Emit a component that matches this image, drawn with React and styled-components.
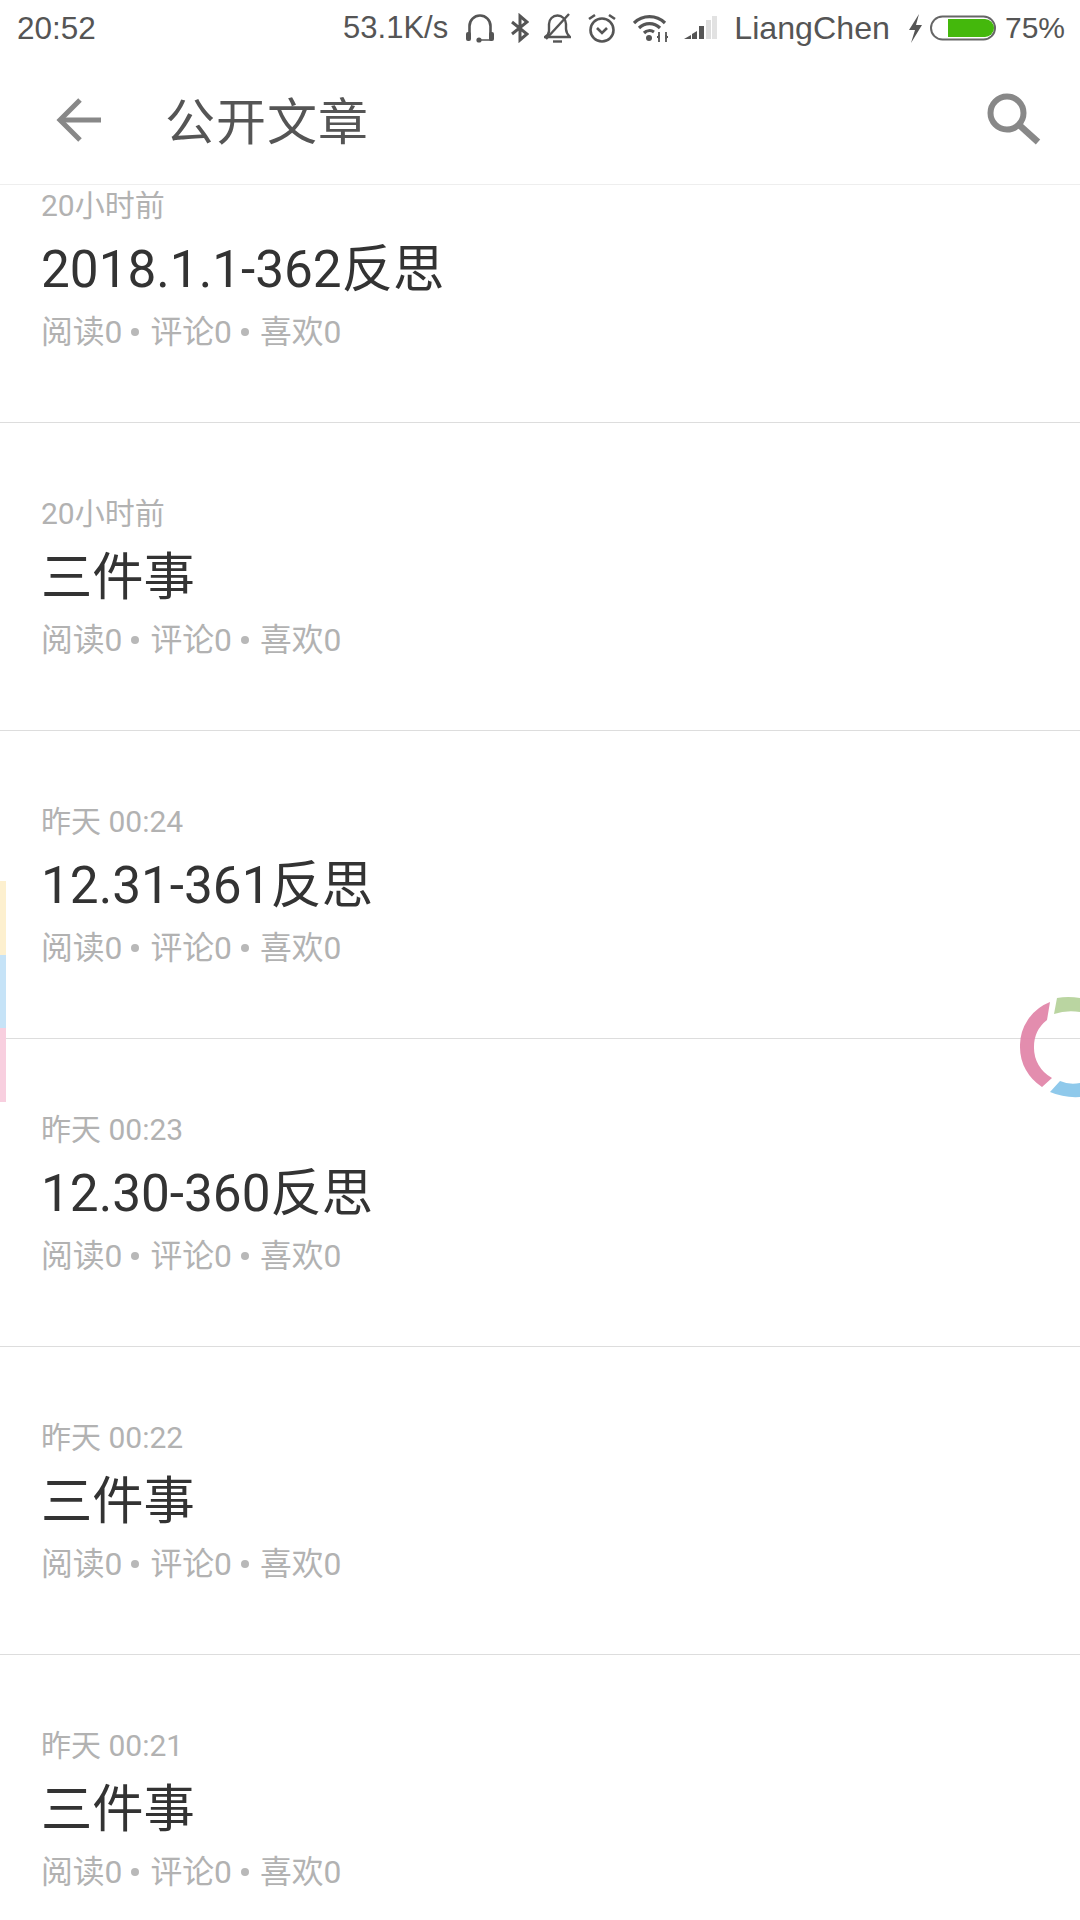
import React from "react";
import styled, { createGlobalStyle } from "styled-components";

const Global = createGlobalStyle`
  html, body { margin: 0; padding: 0; background: #fff; }
  body { font-family: Roboto, "Noto Sans CJK SC", sans-serif; }
`;

const Page = styled.div`
  position: relative;
  width: 1080px;
  height: 1920px;
  overflow: hidden;
  background: #fff;
  display: flex;
  flex-direction: column;
`;

const StatusBar = styled.div`
  height: 56px;
  flex: none;
  display: flex;
  align-items: center;
  justify-content: space-between;
  padding: 0 15px 0 17px;
  color: #555;
`;

const StatusGroup = styled.div`
  display: flex;
  align-items: center;
`;

const StatusText = styled.span`
  margin-left: ${(p) => p.$ml || 0}px;
  margin-right: ${(p) => p.$mr || 0}px;
  font-family: "Liberation Sans", sans-serif;
  font-size: ${(p) => p.$size || 31}px;
`;

const StatusIcon = styled.svg`
  flex: none;
  margin-left: ${(p) => p.$ml || 0}px;
  display: block;
`;

const Header = styled.header`
  flex: none;
  height: 129px;
  box-sizing: border-box;
  display: flex;
  align-items: center;
  padding: 0 39px 0 55px;
  background: #fff;
  border-bottom: 1.5px solid #eee;
  position: relative;
  z-index: 1;
`;

const HeaderTitle = styled.h1`
  margin: -5px 0 0 64px;
  flex: 1;
  font-size: 50px;
  font-weight: 400;
  letter-spacing: 1px;
  color: #555;
  line-height: 1;
  font-family: "Noto Sans CJK SC", sans-serif;
`;

const ListViewport = styled.div`
  flex: 1;
  overflow: hidden;
`;

const List = styled.div`
  margin-top: -70px;
`;

const Row = styled.article`
  height: 308px;
  box-sizing: border-box;
  padding: 71px 0 0 41px;
  border-bottom: 1.5px solid #ddd;
`;

const RowTime = styled.div`
  font-size: 30px;
  line-height: 40px;
  color: #b2b2b2;
`;

const RowTitle = styled.div`
  margin-top: 9px;
  font-size: 51.3px;
  line-height: 70px;
  color: #333;
`;

const RowMeta = styled.div`
  margin-top: 7px;
  font-size: 31.8px;
  line-height: 40px;
  color: #b2b2b2;
  display: flex;
  align-items: center;
`;

const Dot = styled.span`
  width: 8px;
  height: 8px;
  border-radius: 50%;
  background: #b8b8b8;
  margin: 0 11px 0 9px;
`;

const SideStrip = styled.div`
  position: absolute;
  left: 0;
  top: 881px;
  width: 6px;
  display: flex;
  flex-direction: column;
`;

const StripPart = styled.div`
  height: ${(p) => p.$h}px;
  background: ${(p) => p.$c};
`;

const Ring = styled.svg`
  position: absolute;
  right: 0;
  top: 990px;
  opacity: 0.92;
`;

const rows = [
  ["20小时前", "2018.1.1-362反思"],
  ["20小时前", "三件事"],
  ["昨天 00:24", "12.31-361反思"],
  ["昨天 00:23", "12.30-360反思"],
  ["昨天 00:22", "三件事"],
  ["昨天 00:21", "三件事"],
];

export default function App() {
  return (
    <Page>
      <Global />
      <StatusBar>
        <StatusText $size={31.5}>20:52</StatusText>
        <StatusGroup>
          <StatusText $mr={18} $size={31}>53.1K/s</StatusText>
          <StatusIcon width="28" height="30" viewBox="0 0 28 30" fill="none" stroke="#555" strokeWidth="2.6">
            <path d="M3.5 22V13a10.5 10.5 0 0 1 21 0v9" />
            <rect x="0" y="19" width="5" height="9" rx="2" fill="#555" stroke="none" />
            <rect x="23" y="19" width="5" height="9" rx="2" fill="#555" stroke="none" />
            <path d="M13 27h12" strokeWidth="1.5" />
            <circle cx="13" cy="27" r="2.6" fill="#555" stroke="none" />
          </StatusIcon>
          <StatusIcon $ml={17} width="18" height="30" viewBox="0 0 18 30" fill="none" stroke="#555" strokeWidth="3">
            <path d="M1 9l15 12-7 6V3l7 6L1 21" />
          </StatusIcon>
          <StatusIcon $ml={15} width="27" height="30" viewBox="0 0 27 30" fill="none" stroke="#555" strokeWidth="2.4">
            <path d="M1 24h25c-3-3-4-5-4-8V11a8.5 8.5 0 0 0-17 0v7c0 2-1 4-4 6z" />
            <path d="M9 28.5h9" />
            <path d="M25 1L2 26" />
          </StatusIcon>
          <StatusIcon $ml={16} width="30" height="30" viewBox="0 0 30 30" fill="none" stroke="#555" strokeWidth="2.6">
            <circle cx="15" cy="17" r="11.5" />
            <path d="M10 15l5 5 5-5" />
            <path d="M2 6l6-4M28 6l-6-4" />
          </StatusIcon>
          <StatusIcon $ml={16} width="36" height="30" viewBox="0 0 36 30" fill="none" stroke="#555" strokeWidth="3.2">
            <path d="M1 10a22 22 0 0 1 31 0" />
            <path d="M6 15a15 15 0 0 1 21 0" />
            <path d="M11 20a8 8 0 0 1 10-1" />
            <circle cx="16" cy="25" r="3" fill="#555" stroke="none" />
            <path d="M26 19v10M33 19v10" strokeWidth="1.8" />
            <path d="M24 24l2-2v4zM35 24l-2-2v4z" strokeWidth="1" />
          </StatusIcon>
          <StatusIcon $ml={15} width="34" height="26" viewBox="0 0 34 26" fill="#555">
            <path d="M0 24l7-4v4z" />
            <path d="M8 19l5-3v8H8z" />
            <rect x="15" y="11" width="5" height="13" />
            <rect x="22" y="5" width="5" height="19" fill="#ddd" />
            <rect x="28" y="1" width="5" height="23" fill="#e2e2e2" />
          </StatusIcon>
          <StatusText $ml={16} $size={32.2}>LiangChen</StatusText>
          <StatusIcon $ml={17} width="16" height="30" viewBox="0 0 16 30" fill="#555">
            <path d="M12 1L2 17h6L4 30l11-18H9z" />
          </StatusIcon>
          <StatusIcon $ml={7} width="67" height="26" viewBox="0 0 67 26">
            <rect x="1" y="1.5" width="64" height="23" rx="11.5" fill="#fff" stroke="#666" strokeWidth="2" />
            <path d="M18 4h37a9 9 0 0 1 0 18H18z" fill="#44b80c" />
          </StatusIcon>
          <StatusText $ml={8} $size={30}>75%</StatusText>
        </StatusGroup>
      </StatusBar>
      <Header>
        <svg width="46" height="46" viewBox="0 0 46 46" fill="none" stroke="#888" strokeWidth="5">
          <path d="M46 23H5" />
          <path d="M25 3L5 23l20 20" />
        </svg>
        <HeaderTitle>公开文章</HeaderTitle>
        <svg width="54" height="54" viewBox="0 0 54 54" fill="none" stroke="#888">
          <circle cx="20" cy="20" r="16.5" strokeWidth="6" />
          <path d="M31 31l20 18" strokeWidth="6.5" />
        </svg>
      </Header>
      <ListViewport>
        <List>
          {rows.map(([time, title], i) => (
            <Row key={i}>
              <RowTime>{time}</RowTime>
              <RowTitle>{title}</RowTitle>
              <RowMeta>
                阅读0<Dot />评论0<Dot />喜欢0
              </RowMeta>
            </Row>
          ))}
        </List>
      </ListViewport>
      <SideStrip>
        <StripPart $h={74} $c="#fdf0cf" />
        <StripPart $h={73} $c="#c6e3f7" />
        <StripPart $h={74} $c="#f8cfdf" />
      </SideStrip>
      <Ring width="60" height="116" viewBox="1020 990 60 116">
        <path d="M1050 1002A47 47 0 0 0 1020 1047A47 47 0 0 0 1042 1087L1052 1078A34 34 0 0 1 1034 1047A34 34 0 0 1 1047 1020Z" fill="#e184a8" />
        <path d="M1057 998Q1068 996 1080 998V1012Q1066 1010 1054 1014Z" fill="#b5d29a" />
        <path d="M1050 1092Q1064 1098 1080 1097V1083Q1069 1085 1060 1081Z" fill="#86c5ea" />
      </Ring>
    </Page>
  );
}
